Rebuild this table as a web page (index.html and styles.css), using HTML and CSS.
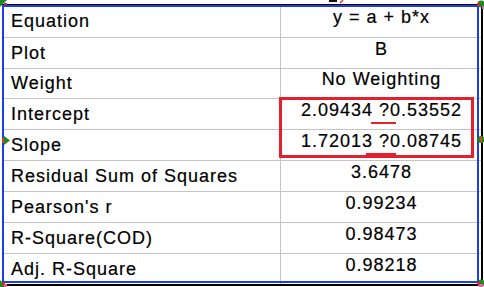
FILE: index.html
```html
<!DOCTYPE html>
<html>
<head>
<meta charset="utf-8">
<link rel="stylesheet" href="styles.css">
</head>
<body>
<div class="sheet">
  <div class="cell label r1">Equation</div><div class="cell value r1"><span class="txt">y = a + b*x</span></div>
  <div class="cell label">Plot</div><div class="cell value"><span class="txt">B</span></div>
  <div class="cell label">Weight</div><div class="cell value"><span class="txt">No Weighting</span></div>
  <div class="cell label">Intercept</div><div class="cell value"><span class="txt">2.09434<span class="mark m1"> ?</span>0.53552</span></div>
  <div class="cell label">Slope</div><div class="cell value"><span class="txt">1.72013<span class="mark m2"> ?</span>0.08745</span></div>
  <div class="cell label">Residual Sum of Squares</div><div class="cell value"><span class="txt">3.6478</span></div>
  <div class="cell label">Pearson's r</div><div class="cell value"><span class="txt">0.99234</span></div>
  <div class="cell label">R-Square(COD)</div><div class="cell value"><span class="txt">0.98473</span></div>
  <div class="cell label last">Adj. R-Square</div><div class="cell value last"><span class="txt">0.98218</span></div>

  <div class="selection"></div>
  <div class="highlight"></div>

  <svg class="handle h-tl" width="8" height="8" viewBox="0 0 8 8"><path d="M0 0H7L0 7Z" fill="#1c8a1c"/><path d="M4 3h3v2H4z" fill="#e02020"/></svg>
  <svg class="handle h-tr" width="9" height="9" viewBox="0 0 9 9"><circle cx="5" cy="4" r="3.5" fill="#1c8a1c"/><path d="M1 3h3v3H1z" fill="#e02020"/><path d="M6 6h3v3H6z" fill="#e060a0"/></svg>
  <svg class="handle h-ml" width="8" height="9" viewBox="0 0 8 9"><path d="M2 0L8 4.5L2 9Z" fill="#1c8a1c"/><path d="M0 2h2v5H0z" fill="#e04020"/></svg>
  <svg class="handle h-mr" width="8" height="9" viewBox="0 0 8 9"><circle cx="4" cy="4.5" r="3.5" fill="#1c8a1c"/><path d="M3 2h2v5H3z" fill="#e04020"/></svg>
  <svg class="handle h-bl" width="8" height="8" viewBox="0 0 8 8"><path d="M0 8V1L7 8Z" fill="#1c8a1c"/><path d="M2 3h3v3H2z" fill="#e02020"/><path d="M4 5h3v3H4z" fill="#e060a0"/></svg>
  <svg class="handle h-br" width="9" height="9" viewBox="0 0 9 9"><circle cx="5" cy="5" r="3.5" fill="#1c8a1c"/><path d="M1 4h3v3H1z" fill="#e02020"/><path d="M3 6h4v3H3z" fill="#e060a0"/></svg>
  <svg class="handle h-tm" width="18" height="4" viewBox="0 0 18 4"><path d="M0 0h8v2H0z" fill="#111"/><path d="M11 3L14 0" stroke="#e02020" stroke-width="1.2"/></svg>
</div>
</body>
</html>
```

FILE: styles.css
```css
html, body {
  margin: 0;
  padding: 0;
  background: #ffffff;
}

body {
  width: 484px;
  height: 287px;
  overflow: hidden;
  font-family: "Liberation Sans", Arial, sans-serif;
  font-size: 18px;
  letter-spacing: 1px;
  color: #000;
  -webkit-text-stroke: 0.2px #000;
}

.sheet {
  position: relative;
  margin: 4px 0 0 2px;
  width: 479px;
  display: grid;
  grid-template-columns: 279px 1fr;
  grid-template-rows: 33px 31px 30px 31px 31px 31px 31px 31px 30px;
  border-top: 1px solid #000;
  border-right: 2px solid #000;
  border-bottom: 2px solid #000;
}

.cell {
  box-sizing: border-box;
  display: flex;
  align-items: center;
  border-bottom: 1px solid #c4c4c4;
  white-space: pre;
}

.cell.last {
  border-bottom: none;
}

.label {
  padding-left: 9px;
  border-right: 1px solid #c4c4c4;
}

.value {
  justify-content: center;
  padding-bottom: 8px;
  padding-left: 1px;
}

.mark {
  position: relative;
  display: inline-block;
}

.mark::after {
  content: "";
  position: absolute;
  height: 2px;
  background: #e5202e;
  bottom: -3px;
}

.m1::after {
  left: -2px;
  width: 25px;
}

.m2::after {
  left: -7px;
  width: 30px;
}

.selection {
  position: absolute;
  left: 0;
  top: 0;
  width: 477px;
  height: 278px;
  box-sizing: border-box;
  border: 2px solid #1a3fe6;
  pointer-events: none;
}

.highlight {
  position: absolute;
  left: 277px;
  top: 92px;
  width: 195px;
  height: 61px;
  box-sizing: border-box;
  border: 3px solid #e5202e;
}

.handle {
  position: absolute;
  display: block;
}

.h-tl { left: -2px; top: -5px; }
.h-tr { left: 474px; top: -5px; }
.h-ml { left: 0px; top: 131px; }
.h-mr { left: 475px; top: 130px; }
.h-bl { left: -2px; top: 274px; }
.h-br { left: 474px; top: 273px; }
.h-tm { left: 327px; top: -5px; }
```
